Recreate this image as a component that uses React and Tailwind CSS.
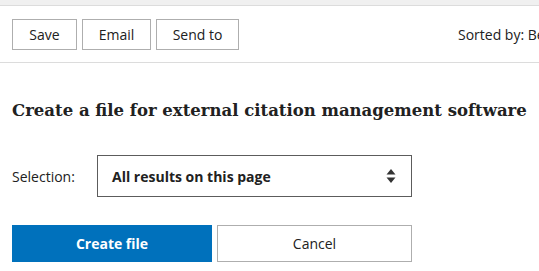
const SortIcon = () => (
  <svg width="10" height="16" viewBox="0 0 10 16" className="text-[#333]">
    <path d="M5 1 L9.5 6.5 H0.5 Z" fill="currentColor" />
    <path d="M5 15 L9.5 9.5 H0.5 Z" fill="currentColor" />
  </svg>
);

export default function App() {
  const sans = "font-['Segoe_UI','Open_Sans','Noto_Sans',sans-serif]";
  const actions = [
    { label: 'Save', w: 'w-[65px]' },
    { label: 'Email', w: 'w-[69px]' },
    { label: 'Send to', w: 'w-[83px]' },
  ];
  return (
    <div className={`w-[539px] h-[271px] overflow-hidden bg-white text-[#212121] ${sans}`}>
      {/* top strip */}
      <div className="h-[6px] bg-[#f0f0f0] border-b border-[#dcdcdc]" />

      {/* action bar */}
      <div className="h-[57px] border-b border-[#dcdcdc] flex items-center justify-between pl-3 pt-[1px] whitespace-nowrap">
        <div className="flex gap-[5px]">
          {actions.map((a) => (
            <button
              key={a.label}
              className={`${a.w} h-[31px] border border-[#aeaeae] bg-white text-[14px] text-[#212121]`}
            >
              {a.label}
            </button>
          ))}
        </div>
        <div className="text-[14px] mr-[-40px] w-[121px]">Sorted by: Best match</div>
      </div>

      {/* heading */}
      <h2 className="mt-[37px] ml-3 text-[16.5px] font-bold font-['DejaVu_Serif','Liberation_Serif',serif] whitespace-nowrap leading-[22px]">
        Create a file for external citation management software
      </h2>

      {/* selection */}
      <div className="flex items-center mt-[33px] ml-3">
        <label className="text-[14px] w-[85px]">Selection:</label>
        <div className="w-[315px] h-[42px] border border-[#5c5c5c] flex items-center justify-between pl-[14px] pr-[15px]">
          <span className="text-[14px] font-bold">All results on this page</span>
          <SortIcon />
        </div>
      </div>

      {/* buttons */}
      <div className="flex gap-[5px] mt-[28px] ml-3">
        <button className="w-[200px] h-[37px] bg-[#0071bc] text-white text-[14px] font-bold">
          Create file
        </button>
        <button className="w-[195px] h-[37px] border border-[#aeaeae] bg-white text-[14px] text-[#212121]">
          Cancel
        </button>
      </div>
    </div>
  );
}
